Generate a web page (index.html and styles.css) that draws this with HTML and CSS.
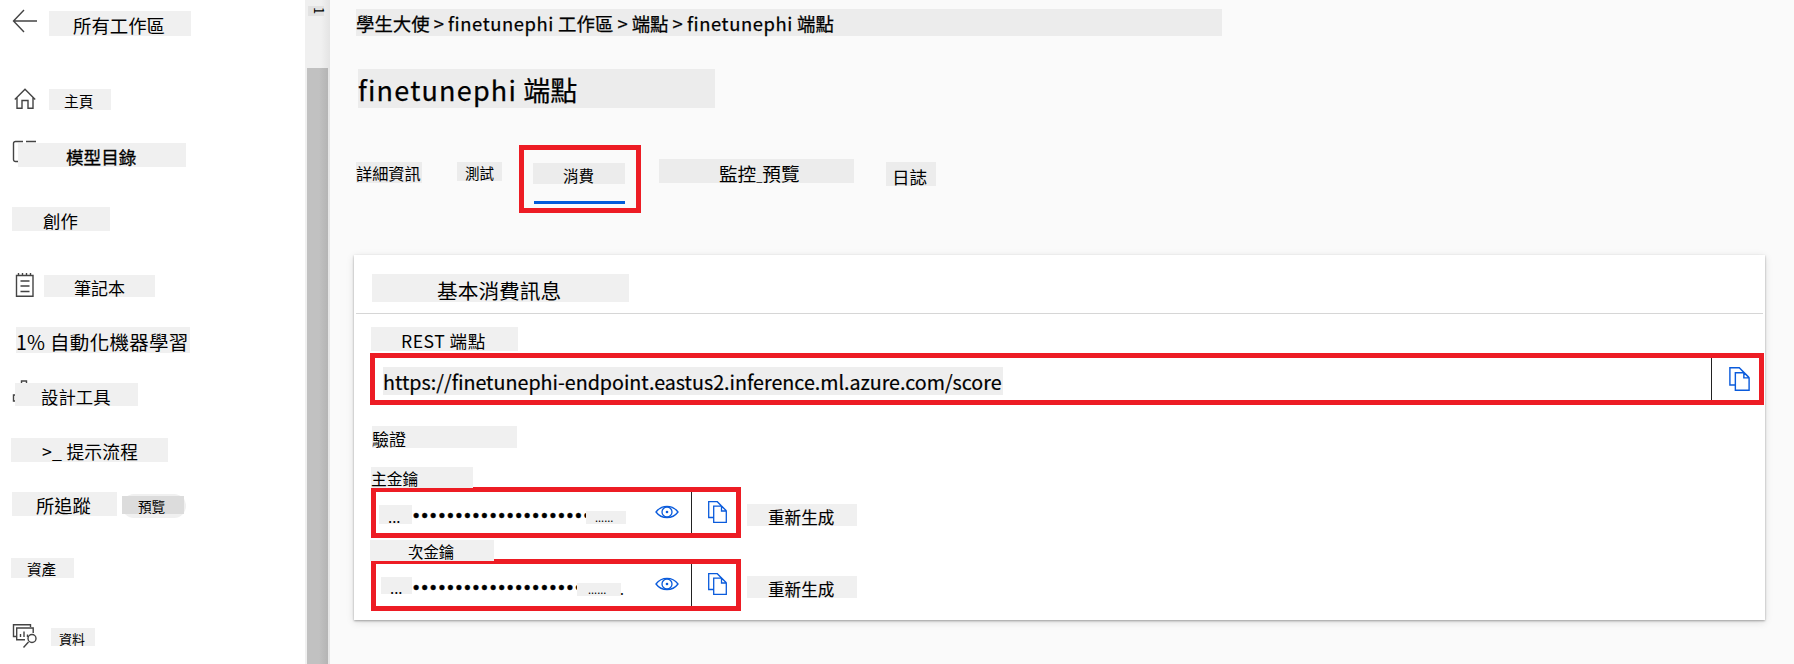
FILE: index.html
```html
<!DOCTYPE html>
<html lang="zh-Hant">
<head>
<meta charset="utf-8">
<title>finetunephi 端點</title>
<link rel="stylesheet" href="styles.css">
</head>
<body>
<svg width="0" height="0" class="defs">
  <symbol id="copy" viewBox="0 0 19 22"><path d="M6 16.500H.7V.7h8.600l4 4M5.700 5.200h8l4.600 4.600v11.500H5.700zM13.500 5.200v4.800h4.800M9.300.7l8.800 8.800" fill="none" stroke="#0a5bdc" stroke-width="1.300"/></symbol>
  <symbol id="eye" viewBox="0 0 24 14"><path d="M1 7C4 3 7.500 1.300 12 1.300S20 3 23 7c-3 4-6.500 5.700-11 5.700S4 11 1 7z" fill="none" stroke="#0a5bdc" stroke-width="1.300"/><circle cx="12" cy="7" r="5" fill="none" stroke="#0a5bdc" stroke-width="1.300"/><circle cx="12" cy="7" r="1.300" fill="#0a5bdc"/></symbol>
</svg>
<nav class="sidebar">
  <a class="row back"><svg class="ic-back" width="26" height="24" viewBox="0 0 26 24"><path d="M12 1 1.500 12 12 23M1.500 12H25" /></svg><span class="patch">所有工作區</span></a>
  <a class="row home"><svg class="ic-home" width="22" height="22" viewBox="0 0 22 22"><path d="M.8 11.500 11 1.200l10.200 10.300M3 9.500v10.700h5V12.500h6v7.700h5V9.500"/></svg><span class="patch">主頁</span></a>
  <a class="row catalog"><svg class="ic-catalog" width="26" height="24" viewBox="0 0 26 24"><path d="M6 21.500H3.500a2 2 0 0 1-2-2V3.500a2 2 0 0 1 2-2H11M14 1.500h10"/></svg><span class="patch">模型目錄</span></a>
  <div class="row author"><span class="patch">創作</span></div>
  <a class="row note"><svg class="ic-note" width="20" height="26" viewBox="0 0 20 26"><path d="M1.500 3.500h16.500v20.700H1.500zM3.500 1v2.500M7.500 1v2.500M11.500 1v2.500M15.500 1v2.500M5.500 9h9M5.500 14h9M5.500 19.500h9"/></svg><span class="patch">筆記本</span></a>
  <a class="row automl"><span class="patch">1% 自動化機器學習</span></a>
  <a class="row design"><svg class="ic-design" width="18" height="26" viewBox="0 0 18 26"><path d="M9.500 4V2h5v2M4 16H1.500v6H4"/></svg><span class="patch">設計工具</span></a>
  <a class="row flow"><span class="patch">&gt;_ 提示流程</span></a>
  <a class="row trace"><span class="patch">所追蹤</span><span class="pill"><span class="patch">預覽</span></span></a>
  <div class="row assets"><span class="patch">資產</span></div>
  <a class="row data"><svg class="ic-data" width="26" height="26" viewBox="0 0 26 26"><path d="M4 13.500H1.500V1.700h17V4M13 16.800H4.700V5h16.500v5M8.500 14v-3M12 14V8.500M15.500 14v-2.500M11.500 24.500l5-5.500"/><circle cx="20" cy="15.500" r="4"/></svg><span class="patch">資料</span></a>
</nav>
<div class="gutter"><span class="gutter-mark">1</span><div class="thumb"></div></div>
<main>
  <div class="crumbs patch">學生大使 &gt; <span>finetunephi</span> 工作區 &gt; 端點 &gt; <span>finetunephi</span> 端點</div>
  <h1 class="patch"><span>finetunephi</span> 端點</h1>
  <div class="tabs">
    <span class="patch t1">詳細資訊</span>
    <span class="patch t2">測試</span>
    <div class="tab-active"><span class="patch">消費</span></div>
    <span class="patch t4">監控<small>_</small>預覽</span>
    <span class="patch t5">日誌</span>
  </div>
  <section class="card">
    <header><h2 class="patch">基本消費訊息</h2></header>
    <div class="patch rest">REST 端點</div>
    <div class="box url"><span class="patch">https://finetunephi-endpoint.eastus2.inference.ml.azure.com/score</span><i class="cut"><svg width="21" height="24"><use href="#copy"/></svg></i></div>
    <div class="patch auth">驗證</div>
    <div class="patch key1">主金鑰</div>
    <div class="keyrow k1">
      <div class="box"><span class="patch lead">...</span><span class="dots">•••••••••••••••••••••</span><span class="patch tail">......</span><svg class="eye" width="24" height="14"><use href="#eye"/></svg><i class="cut"><svg width="19" height="22"><use href="#copy"/></svg></i></div>
      <span class="patch regen">重新生成</span>
    </div>
    <div class="patch key2">次金鑰</div>
    <div class="keyrow k2">
      <div class="box"><span class="patch lead">...</span><span class="dots">••••••••••••••••••••</span><span class="patch tail">......</span><span class="stop">.</span><svg class="eye" width="24" height="14"><use href="#eye"/></svg><i class="cut"><svg width="19" height="22"><use href="#copy"/></svg></i></div>
      <span class="patch regen">重新生成</span>
    </div>
  </section>
</main>
</body>
</html>
```
FILE: styles.css
```css
* { box-sizing: border-box; }
body {
  margin: 0;
  width: 1794px;
  height: 664px;
  overflow: hidden;
  display: flex;
  background: #fafafa;
  color: #000;
  font-family: "Noto Sans CJK TC", "Noto Sans", sans-serif;
}
.defs { position: absolute; }
h1, h2 { margin: 0; font-weight: 400; }
.patch {
  display: block;
  flex: none;
  background: #f0f0f0;
  white-space: nowrap;
}

/* Sidebar */
.sidebar { width: 305px; height: 664px; background: #fff; flex: none; padding-top: 11px; }
.row { display: flex; align-items: center; position: relative; }
.row svg { flex: none; fill: none; stroke: #444; stroke-width: 1.4; }
.back { height: 25px; padding-left: 12px; }
.ic-back { margin: -5px 11px 0 0; }
.back .patch { width: 142px; height: 25px; line-height: 25px; padding: 2px 0 0 24px; font-size: 18.4px; }
.home { height: 21px; margin-top: 53px; padding-left: 14px; }
.ic-home { margin: -2px 13px 0 0; }
.home .patch { width: 62px; height: 21px; line-height: 21px; padding: 1px 0 0 15px; font-size: 14.7px; }
.catalog { height: 24px; margin-top: 33px; padding-left: 18px; }
.ic-catalog { position: absolute; left: 12px; top: -3px; }
.catalog .patch { position: relative; width: 168px; height: 24px; line-height: 24px; padding: 2px 0 0 48px; font-size: 17.6px; -webkit-text-stroke: .3px #000; }
.author { height: 24px; margin-top: 40px; padding-left: 12px; }
.author .patch { width: 98px; height: 24px; line-height: 24px; padding: 2px 0 0 31px; font-size: 17.4px; }
.note { height: 22px; margin-top: 44px; padding-left: 15px; }
.ic-note { margin: -3px 9px 0 0; }
.note .patch { width: 111px; height: 22px; line-height: 22px; padding: 2px 0 0 30px; font-size: 17px; }
.automl { height: 26px; margin-top: 30px; padding-left: 16px; }
.automl .patch { width: 174px; height: 26px; line-height: 26px; padding-top: 2px; font-size: 19.5px; letter-spacing: .3px; }
.design { height: 23px; margin-top: 30px; padding-left: 15px; }
.ic-design { position: absolute; left: 12px; top: -4px; }
.design .patch { position: relative; width: 123px; height: 23px; line-height: 23px; padding: 2px 0 0 26px; font-size: 17.4px; }
.flow { height: 24px; margin-top: 32px; padding-left: 11px; }
.flow .patch { width: 157px; height: 24px; line-height: 24px; padding: 1px 0 0 31px; font-size: 17.8px; letter-spacing: .2px; }
.trace { height: 24px; margin-top: 30px; padding-left: 12px; }
.trace > .patch { width: 105px; height: 24px; line-height: 24px; padding: 1px 0 0 24px; font-size: 18.3px; }
.pill { width: 64px; height: 24px; margin: 4px 0 0 5px; padding-top: 2px; background: #f0f0f0; border-radius: 12px; }
.pill .patch { width: 62px; height: 18px; line-height: 18px; padding: 1px 0 0 16px; background: #dcdcdc; font-size: 13.6px; }
.assets { height: 20px; margin-top: 42px; padding-left: 11px; }
.assets .patch { width: 63px; height: 20px; line-height: 20px; padding: 1px 0 0 16px; font-size: 14.6px; }
.data { height: 18px; margin-top: 50px; padding-left: 12px; }
.ic-data { margin: -3px 13px 0 0; }
.data .patch { width: 44px; height: 18px; line-height: 18px; padding: 2px 0 0 8px; font-size: 13px; }

/* Scrollbar */
.gutter { width: 25px; height: 664px; flex: none; background: linear-gradient(90deg, #f0f0f0 0 16px, #e4e4e4 25px); position: relative; padding: 68px 2px 0; }
.thumb { height: 596px; width: 21px; background: linear-gradient(90deg, #c1c1c1 0 12px, #b4b4b4); }
.gutter-mark { position: absolute; left: 3px; top: 6px; width: 16px; height: 10px; background: #e2e2e2; font-size: 13px; line-height: 10px; text-align: center; writing-mode: vertical-rl; }

/* Main */
main { width: 1464px; height: 664px; padding: 9px 0 0 24px; }
main > .patch, .tabs .patch { background: #ececec; }
.crumbs { width: 866px; height: 27px; line-height: 27px; margin-left: 2px; padding-top: 1px; font-size: 18.4px; -webkit-text-stroke: .25px #000; }
.crumbs span { letter-spacing: .6px; }
h1.patch { width: 357px; height: 39px; line-height: 39px; margin: 33px 0 0 4px; padding: 1px 0 0 0; font-size: 27px; -webkit-text-stroke: .25px #000; }
h1 span { letter-spacing: 1.2px; }
.tabs { display: flex; align-items: flex-start; height: 68px; margin: 37px 0 0 2px; }
.t1 { width: 66px; height: 21px; line-height: 21px; margin-top: 17px; padding: 1px 0 0 0; font-size: 16.2px; }
.t2 { width: 45px; height: 19px; line-height: 19px; margin: 17px 0 0 35px; padding: 1px 0 0 8px; font-size: 14.5px; }
.tab-active { width: 122px; height: 68px; margin-left: 17px; border: 5px solid #ed1c24; padding: 13px 11px 0 9px; }
.tab-active .patch { height: 21px; line-height: 21px; padding: 2px 0 0 30px; font-size: 15.5px; }
.tab-active::after { content: ""; display: block; height: 3px; margin: 17px 0 0 1px; background: #015cda; }
.t4 { width: 195px; height: 24px; line-height: 24px; margin: 14px 0 0 18px; padding: 2px 0 0 60px; font-size: 18.6px; }
.t4 small { font-size: 11px; }
.t5 { width: 50px; height: 24px; line-height: 24px; margin: 17px 0 0 32px; padding: 3px 0 0 6px; font-size: 17.6px; }

/* Card */
.card { width: 1411px; height: 365px; margin-top: 42px; background: #fff; box-shadow: 0 1px 2px rgba(0,0,0,.32), 0 2px 8px rgba(0,0,0,.12); }
.card header { height: 59px; margin: 0 2px; padding: 19px 0 0 16px; border-bottom: 1px solid #d6d6d6; }
h2.patch { width: 257px; height: 28px; line-height: 28px; padding: 2px 0 0 65px; font-size: 20.7px; }
.rest { width: 147px; height: 24px; line-height: 24px; margin: 13px 0 0 17px; padding: 2px 0 0 30px; font-size: 17.6px; letter-spacing: .5px; }
.box { display: flex; border: 5px solid #ed1c24; }
.url { width: 1394px; height: 52px; margin: 2px 0 0 16px; }
.url .patch { width: 620px; height: 28px; line-height: 28px; margin: 9px 0 0 8px; padding: 1px 0 0 0; font-size: 19.68px; background: #eee; -webkit-text-stroke: .2px #000; }
.cut { display: flex; align-items: center; justify-content: center; margin-left: auto; border-left: 1px solid #222; }
.url .cut { width: 48px; padding-left: 8px; }
.auth { width: 145px; height: 22px; line-height: 22px; margin: 21px 0 0 18px; padding: 2px 0 0 0; font-size: 17px; }
.key1 { position: relative; width: 102px; height: 21px; line-height: 21px; margin: 19px 0 0 17px; padding: 1px 0 0 0; font-size: 15.8px; }
.keyrow { display: flex; margin-left: 17px; }
.keyrow .box { width: 370px; flex: none; }
.k1 { margin-top: -1px; height: 51px; }
.k2 { margin-top: -2px; height: 52px; }
.key2 { position: relative; width: 124px; height: 21px; line-height: 21px; margin: 2px 0 0 16px; padding: 1px 0 0 38px; font-size: 15.4px; }
.keyrow .cut { width: 45px; margin-left: 0; padding: 0 0 2px 6px; }
.lead { width: 33px; height: 19px; line-height: 19px; margin: 13px 0 0 3px; padding: 2px 0 0 9px; font-size: 15px; }
.k2 .lead { width: 31px; height: 17px; line-height: 17px; margin-left: 5px; }
.dots { flex: none; width: 173px; height: 20px; margin: 14px 0 0 1px; line-height: 20px; overflow: hidden; white-space: nowrap; font-family: "Liberation Sans", sans-serif; font-size: 18px; letter-spacing: 2.24px; -webkit-text-stroke: .4px #000; }
.k2 .dots { width: 164px; }
.tail { width: 40px; height: 13px; line-height: 13px; margin: 19px 0 0; padding-left: 9px; font-size: 11px; }
.k2 .tail { width: 44px; padding-left: 11px; }
.stop { width: 5px; line-height: 13px; margin-top: 19px; margin-left: -1px; font-size: 14px; }
.eye { margin: 13px 12px 0 auto; }
.regen { width: 110px; height: 22px; line-height: 22px; margin: 17px 0 0 6px; padding: 2px 0 0 21px; font-size: 16.6px; -webkit-text-stroke: .15px #000; }
```
